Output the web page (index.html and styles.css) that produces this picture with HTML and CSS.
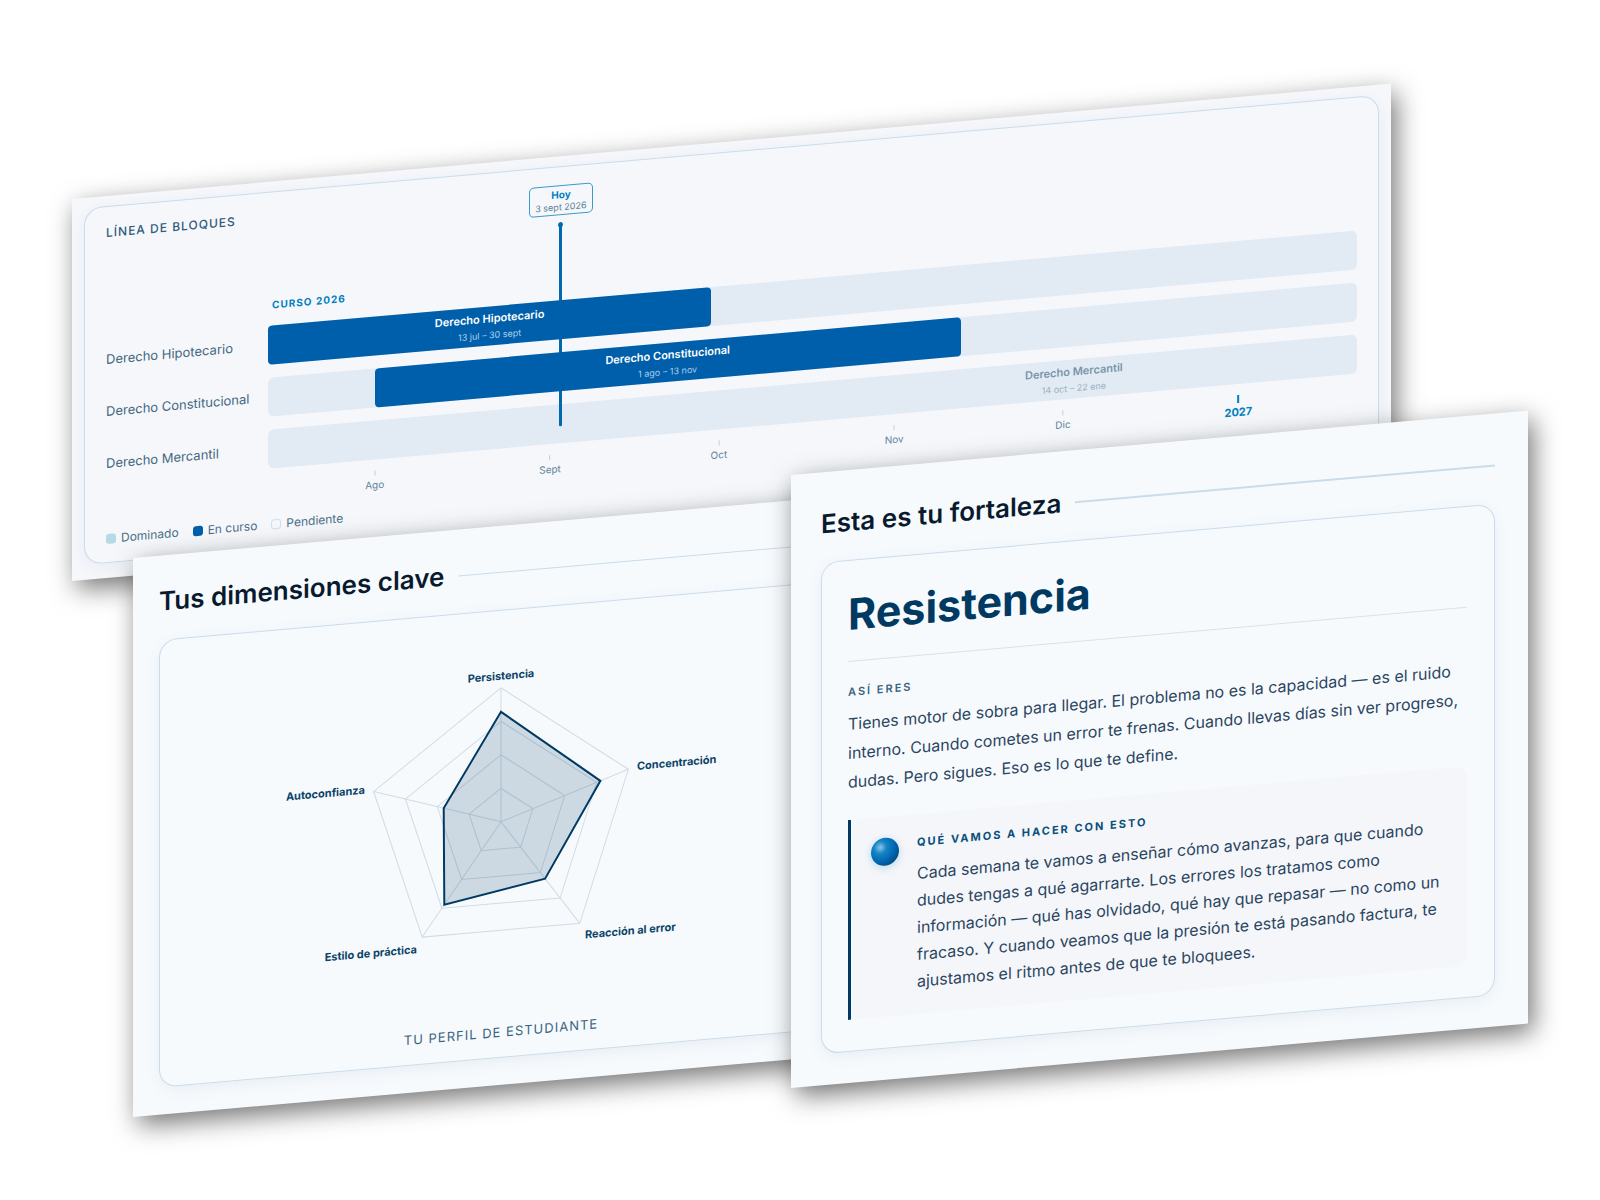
FILE: index.html
```html
<!DOCTYPE html>
<html lang="es">
<head>
  <meta charset="UTF-8">
  <meta name="viewport" content="width=device-width, initial-scale=1.0">
  <title>Tu plan de estudio</title>
  <link rel="stylesheet" href="styles.css">
</head>

<body>
  <main class="stage">

    <!-- Timeline -->
    <section class="panel panel-timeline">
      <div class="card timeline">
        <h2 class="timeline-title">LÍNEA DE BLOQUES</h2>

        <div class="plot">
          <div class="year">CURSO 2026</div>

          <div class="rows">
            <div class="row">
              <div class="row-label">Derecho Hipotecario</div>
              <div class="track">
                <div class="bar" style="margin-left: 0%; width: 40.7%">
                  <strong>Derecho Hipotecario</strong>
                  <span>13 jul – 30 sept</span>
                </div>
              </div>
            </div>
            <div class="row">
              <div class="row-label">Derecho Constitucional</div>
              <div class="track">
                <div class="bar" style="margin-left: 9.8%; width: 53.8%">
                  <strong>Derecho Constitucional</strong>
                  <span>1 ago – 13 nov</span>
                </div>
              </div>
            </div>
            <div class="row">
              <div class="row-label">Derecho Mercantil</div>
              <div class="track">
                <div class="bar pending" style="margin-left: 48%; width: 52%">
                  <strong>Derecho Mercantil</strong>
                  <span>14 oct – 22 ene</span>
                </div>
              </div>
            </div>
          </div>

          <div class="axis">
            <div class="tick" style="left: 9.8%">Ago</div>
            <div class="tick" style="left: 25.9%">Sept</div>
            <div class="tick" style="left: 41.4%">Oct</div>
            <div class="tick" style="left: 57.5%">Nov</div>
            <div class="tick" style="left: 73%">Dic</div>
            <div class="tick new-year" style="left: 89.1%">2027</div>
          </div>

          <div class="overlay">
            <div class="today" style="left: 26.9%">
              <div class="today-box">
                <strong>Hoy</strong>
                <span>3 sept 2026</span>
              </div>
              <div class="today-line"></div>
            </div>
          </div>
        </div>

        <ul class="legend">
          <li><i class="swatch done"></i>Dominado</li>
          <li><i class="swatch active"></i>En curso</li>
          <li><i class="swatch todo"></i>Pendiente</li>
        </ul>
      </div>
    </section>

    <!-- Radar -->
    <section class="panel panel-radar">
      <h2 class="heading">Tus dimensiones clave</h2>
      <div class="card radar">
        <svg class="radar-chart" width="480" height="360" viewBox="-240 -180 480 360">
          <g class="grid">
            <polygon points="0,-33.5 31.9,-10.4 19.7,27.1 -19.7,27.1 -31.9,-10.4" />
            <polygon points="0,-67 63.7,-20.7 39.4,54.2 -39.4,54.2 -63.7,-20.7" />
            <polygon points="0,-100.5 95.6,-31.1 59.1,81.3 -59.1,81.3 -95.6,-31.1" />
            <polygon points="0,-134 127.4,-41.4 78.8,108.4 -78.8,108.4 -127.4,-41.4" />
            <path d="M0 0V-134M0 0L127.4 -41.4M0 0L78.8 108.4M0 0L-78.8 108.4M0 0L-127.4 -41.4" />
          </g>
          <polygon class="score" points="0,-110 99.4,-32.3 44.1,60.7 -56.7,78 -57.3,-18.6" />
          <g class="names">
            <text x="0" y="-142" text-anchor="middle">Persistencia</text>
            <text x="136" y="-40">Concentración</text>
            <text x="84" y="124">Reacción al error</text>
            <text x="-84" y="124" text-anchor="end">Estilo de práctica</text>
            <text x="-136" y="-40" text-anchor="end">Autoconfianza</text>
          </g>
        </svg>
        <p class="caption">TU PERFIL DE ESTUDIANTE</p>
      </div>
    </section>

    <!-- Strength -->
    <section class="panel panel-strength">
      <h2 class="heading thick">Esta es tu fortaleza</h2>
      <div class="card strength">
        <h1>Resistencia</h1>
        <h3>ASÍ ERES</h3>
        <p class="about">Tienes motor de sobra para llegar. El problema no es la capacidad — es el ruido interno. Cuando cometes un error te frenas. Cuando llevas días sin ver progreso, dudas. Pero sigues. Eso es lo que te define.</p>
        <div class="callout">
          <div class="orb"></div>
          <div>
            <h3>QUÉ VAMOS A HACER CON ESTO</h3>
            <p>Cada semana te vamos a enseñar cómo avanzas, para que cuando dudes tengas a qué agarrarte. Los errores los tratamos como información — qué has olvidado, qué hay que repasar — no como un fracaso. Y cuando veamos que la presión te está pasando factura, te ajustamos el ritmo antes de que te bloquees.</p>
          </div>
        </div>
      </div>
    </section>

  </main>
</body>
</html>
```
FILE: styles.css
```css
* {
  box-sizing: border-box;
}
body {
  margin: 0;
  background: #fff;
  color: #2a4560;
  font-family: "Inter", "Liberation Sans", sans-serif;
}
h1, h2, h3, p, ul {
  margin: 0;
  padding: 0;
}

/* the three panels share one grid row and overlap */
.stage {
  display: grid;
  grid-template-columns: minmax(0, 61fr) minmax(0, 658fr) minmax(0, 78fr) minmax(0, 522fr) minmax(0, 137fr);
  align-items: start;
  padding: 0 72px 80px;
}
.panel {
  grid-row: 1;
  background: #f7fafd;
  box-shadow: 5px 9px 26px rgba(0, 0, 0, 0.54);
  transform: skewY(-5deg);
  transform-origin: 0 0;
}
.panel-timeline {
  grid-column: 1 / 5;
  margin-top: 199px;
  padding: 10px 12px 15px;
  background: #f5f7fb;
}
.panel-radar {
  grid-column: 2 / 4;
  margin-top: 558px;
  padding: 30px 26px 27px;
}
.panel-strength {
  grid-column: 3 / 6;
  margin-top: 475px;
  padding: 36px 33px 31px 30px;
}
.card {
  border: 1px solid #c9dcea;
  border-radius: 18px;
  box-shadow: 0 4px 16px rgba(0, 50, 100, 0.06);
}
.heading {
  display: flex;
  align-items: center;
  gap: 14px;
  color: #0a1a2e;
  font-size: 26px;
  font-weight: 600;
  line-height: 32px;
}
.heading::after {
  content: "";
  flex: 1;
  height: 1px;
  background: #c9dcea;
}
.heading.thick::after {
  height: 2px;
}

/* timeline */
.timeline {
  padding: 18px 21px 15px;
}
.timeline-title {
  color: #2f5a78;
  font-size: 12px;
  font-weight: 500;
  letter-spacing: 1px;
  line-height: 16px;
}
.plot {
  position: relative;
  padding-top: 70px;
}
.year {
  margin: 0 0 13px 166px;
  color: #0080bd;
  font-size: 10px;
  font-weight: 700;
  letter-spacing: 1px;
  line-height: 16px;
}
.rows {
  display: grid;
  gap: 13px;
}
.row {
  display: grid;
  grid-template-columns: 162px 1fr;
  align-items: center;
}
.row-label {
  color: #44687f;
  font-size: 13px;
  line-height: 16px;
  padding-bottom: 2px;
}
.track {
  height: 39px;
  border-radius: 6px;
  background: #e2eaf3;
}
.bar {
  position: relative;
  z-index: 2;
  display: flex;
  flex-direction: column;
  align-items: center;
  justify-content: center;
  gap: 4px;
  height: 39px;
  border-radius: 4px;
  background: #005fab;
  color: #fff;
}
.bar strong {
  font-size: 11px;
  font-weight: 600;
  line-height: 14px;
}
.bar span {
  color: #a9cfeb;
  font-size: 9px;
  line-height: 12px;
}
.bar.pending {
  background: none;
  color: #7696aa;
}
.bar.pending span {
  color: #9ab2c2;
}
.axis {
  position: relative;
  height: 48px;
  margin-left: 162px;
}
.tick {
  position: absolute;
  top: 11px;
  display: flex;
  flex-direction: column;
  align-items: center;
  gap: 3px;
  color: #5f8299;
  font-size: 10px;
  line-height: 12px;
  transform: translateX(-50%);
}
.tick::before {
  content: "";
  width: 1px;
  height: 5px;
  background: #b5d3e2;
}
.tick.new-year {
  color: #0080bd;
  font-size: 11px;
  font-weight: 700;
}
.tick.new-year::before {
  width: 2px;
  height: 8px;
  background: #0080bd;
}
.overlay {
  position: absolute;
  top: -16px;
  right: 0;
  left: 162px;
}
.today {
  position: absolute;
  display: flex;
  flex-direction: column;
  align-items: center;
  gap: 7px;
  transform: translateX(-50%);
}
.today-box {
  display: flex;
  flex-direction: column;
  align-items: center;
  justify-content: center;
  width: 64px;
  height: 30px;
  border: 1px solid #3a9acb;
  border-radius: 5px;
}
.today-box strong {
  color: #0080bd;
  font-size: 10px;
  line-height: 13px;
}
.today-box span {
  color: #5f8299;
  font-size: 9px;
  line-height: 12px;
  white-space: nowrap;
}
.today-line {
  position: relative;
  width: 3px;
  height: 204px;
  border-radius: 2px;
  background: #0069ae;
}
.today-line::before {
  content: "";
  position: absolute;
  top: 0;
  left: -1px;
  width: 5px;
  height: 5px;
  border-radius: 50%;
  background: #0069ae;
}
.legend {
  display: flex;
  gap: 14px;
  color: #4c7088;
  font-size: 12px;
  line-height: 16px;
  list-style: none;
}
.legend li {
  display: flex;
  align-items: center;
  gap: 5px;
}
.swatch {
  width: 10px;
  height: 10px;
  border-radius: 3px;
}
.swatch.done {
  background: #b7d9e8;
}
.swatch.active {
  background: #005fab;
}
.swatch.todo {
  border: 1px solid #d3e0ec;
}

/* radar */
.radar {
  display: flex;
  flex-direction: column;
  align-items: center;
  margin-top: 22px;
  padding: 31px 20px 17px;
}
.radar-chart {
  display: block;
  max-width: 100%;
}
.grid {
  fill: none;
  stroke: #cfdce6;
}
.score {
  fill: rgba(0, 55, 95, 0.17);
  stroke: #003a63;
  stroke-width: 2px;
}
.names {
  fill: #0b4468;
  font-size: 11px;
  font-weight: 700;
}
.caption {
  margin-top: 22px;
  color: #3a6480;
  font-size: 13px;
  letter-spacing: 1px;
  line-height: 16px;
}

/* strength */
.strength {
  margin-top: 22px;
  padding: 27px 27px 31px 26px;
}
.strength h1 {
  margin-bottom: 22px;
  padding-bottom: 21px;
  border-bottom: 1px solid #d5e2ed;
  color: #003a63;
  font-size: 43px;
  font-weight: 700;
  line-height: 52px;
}
.strength h3 {
  margin-bottom: 10px;
  color: #3a6480;
  font-size: 11px;
  font-weight: 600;
  letter-spacing: 2px;
  line-height: 16px;
}
.strength p {
  font-size: 16px;
  line-height: 27px;
}
.strength .about {
  line-height: 29px;
}
.callout {
  display: flex;
  gap: 18px;
  margin-top: 23px;
  padding: 20px 20px 19px;
  border-left: 3px solid #003a63;
  border-radius: 0 12px 12px 0;
  background: #f5f6fa;
}
.callout h3 {
  color: #0b4f7c;
  font-weight: 700;
}
.orb {
  flex: none;
  width: 28px;
  height: 28px;
  margin-top: 1px;
  border-radius: 50%;
  background: radial-gradient(circle at 33% 33%, #8cc6e8 0%, #1585c6 24%, #0066b0 55%, #00487f 80%, #003a63 100%);
  box-shadow: 0 2px 8px rgba(0, 128, 189, 0.25);
}
```
